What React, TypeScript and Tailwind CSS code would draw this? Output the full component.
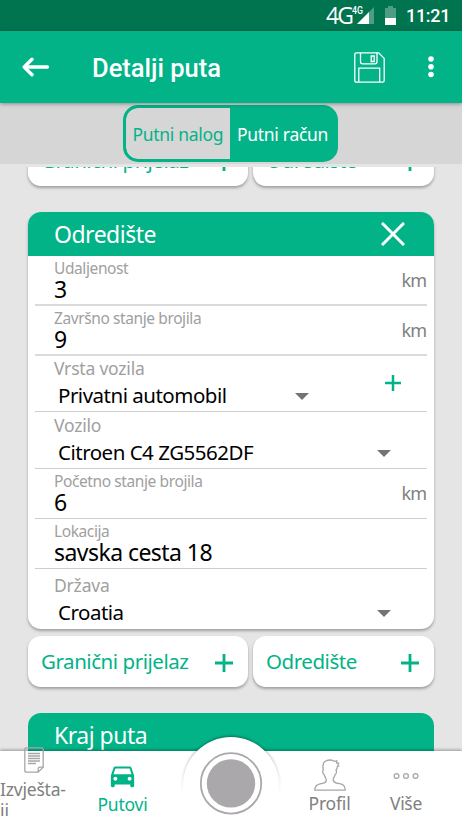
import { ReactNode } from 'react'
import { MdDirectionsCar } from 'react-icons/md'

function Plus({ className }: { className: string }) {
  return (
    <svg viewBox="0 0 18 18" className={className} fill="none" stroke="#02b388" strokeWidth="2.8">
      <path d="M9 0v18M0 9h18" />
    </svg>
  )
}

function StatusBar() {
  return (
    <div className="flex h-[31px] shrink-0 items-center bg-[#00734f] text-white">
      <span className="ml-[326px] w-[26px] font-['Open_Sans'] text-[23px] leading-[33px] tracking-[-1.8px] whitespace-nowrap">4G</span>
      <svg viewBox="0 0 24 31" className="h-[31px] w-6">
        <text x="0" y="14" fontFamily="Roboto" fontWeight="500" fontSize="10.5" textLength="11" lengthAdjust="spacingAndGlyphs" fill="#fff">4G</text>
        <path d="M22 7v17h-5V12z" fill="#4d9d84" />
        <path d="M5 24L17 12v12z" fill="#fff" />
      </svg>
      <svg viewBox="0 0 12 20" className="ml-[9px] h-5 w-3">
        <path d="M3 0h5v2h3v10H0V2h3z" fill="#4d9d84" />
        <path d="M0 12h11v7H0z" fill="#fff" />
      </svg>
      <span className="ml-[9px] font-[Roboto] text-[18px] leading-[31px] font-medium tracking-[-0.3px]">11:21</span>
    </div>
  )
}

function Toolbar() {
  return (
    <div className="relative z-10 flex h-[72px] shrink-0 items-center bg-[#02b388] text-white shadow-[0_1px_4px_rgba(0,0,0,0.35)]">
      <svg viewBox="0 0 28 20" className="ml-[22px] h-5 w-7" fill="none" stroke="#fff" strokeWidth="3.4" strokeLinecap="round" strokeLinejoin="round">
        <path d="M25.5 10H2.5M10 2.2L2.2 10l7.8 7.8" />
      </svg>
      <h1 className="mt-[2px] ml-[42px] w-[262px] font-[Roboto] text-[25.5px] leading-8 font-medium">Detalji puta</h1>
      <svg viewBox="0 0 31 31" className="h-[31px] w-[31px]" fill="none" stroke="#fff" strokeWidth="1.3">
        <path d="M2.5.8h22.2l5.5 5.6v22.2q0 1.6-1.6 1.6H2.4Q.8 30.2.8 28.6V2.5Q.8.8 2.5.8z" />
        <path d="M6.5.8v9q0 2 2 2H21q2 0 2-2v-9M4.800 30V16.200h20.900V30" />
        <path d="M17.200 4h3v5.500h-3z" />
      </svg>
      <svg viewBox="0 0 8 22" className="ml-[42px] h-[22px] w-2" fill="#fff">
        <circle cx="4" cy="3" r="2.8" />
        <circle cx="4" cy="10.8" r="2.8" />
        <circle cx="4" cy="18.5" r="2.8" />
      </svg>
    </div>
  )
}

function Tabs() {
  return (
    <div className="h-16 shrink-0 bg-[#e5e5e5]">
      <div className="flex h-[61px] bg-[#d6d6d6] pt-[2px] pl-[123px]">
        <div className="flex h-[57px] w-[215px] overflow-hidden rounded-[15px] border-[3px] border-[#02b388] bg-[#02b388] text-[17.5px] leading-[52px]">
          <div className="w-[104px] rounded-l-[12px] bg-[#d6d6d6] pl-[6.5px] tracking-[-0.3px] whitespace-nowrap text-[#02b388]">Putni nalog</div>
          <div className="flex-1 pl-[7px] tracking-[-0.3px] whitespace-nowrap text-white">Putni račun</div>
        </div>
      </div>
    </div>
  )
}

function AddButtons() {
  return (
    <div className="flex gap-[5px] text-[20.5px] leading-[51px] whitespace-nowrap text-[#02b388]">
      <div className="flex h-[51px] w-[220px] items-center justify-between rounded-[13px] bg-white pr-[15px] pl-[13px] shadow-[0_2px_3px_rgba(0,0,0,0.3)]">
        <span className="tracking-[-0.45px]">Granični prijelaz</span>
        <Plus className="mt-[3px] h-[18px] w-[18px]" />
      </div>
      <div className="flex h-[51px] w-[181px] items-center justify-between rounded-[13px] bg-white pr-[15px] pl-[13px] shadow-[0_2px_3px_rgba(0,0,0,0.3)]">
        <span className="tracking-[-0.45px]">Odredište</span>
        <Plus className="mt-[3px] h-[18px] w-[18px]" />
      </div>
    </div>
  )
}

function CardHeader({ title, children }: { title: string; children?: ReactNode }) {
  return (
    <div className="flex h-11 items-center justify-between bg-[#02b388] pr-[29px] pl-[26px] text-[23px] leading-[44px] text-white">
      <span className="tracking-[-0.5px]">{title}</span>
      {children}
    </div>
  )
}

function InputRow({ label, value, unit, thick }: { label: string; value: string; unit?: string; thick?: boolean }) {
  return (
    <div className={`mx-[7px] flex h-[50px] justify-between pt-[2px] pl-[19px] ${thick ? 'border-b-2 border-[#dadada]' : 'border-b border-[#cecece]'}`}>
      <div>
        <div className="text-[15.5px] leading-5 tracking-[-0.4px] text-[#a0a0a0]">{label}</div>
        <div className="-mt-px text-[23px] leading-[25px] tracking-[-0.55px] text-black">{value}</div>
      </div>
      {unit && <span className="mr-px text-[18px] leading-[44px] tracking-[-1px] text-[#808080]">{unit}</span>}
    </div>
  )
}

function SelectRow({ label, value, className, action }: { label: string; value: string; className: string; action?: boolean }) {
  return (
    <div className={`mx-[7px] flex pl-[19px] ${className}`}>
      <div className={action ? 'w-[255px]' : 'w-[337px]'}>
        <div className="text-[17.5px] leading-6 tracking-[-0.2px] text-[#a0a0a0]">{label}</div>
        <div className="mt-px flex items-center justify-between pl-1 text-[20.5px] leading-7 text-black">
          <span className="tracking-[-0.5px]">{value}</span>
          <svg viewBox="0 0 14 7" className="mt-[2px] h-[7px] w-[14px]" fill="#747474">
            <path d="M0 0h14L7 7z" />
          </svg>
        </div>
      </div>
      {action && <Plus className="mt-[19px] ml-[76px] h-4 w-4" />}
    </div>
  )
}

function NavBar() {
  return (
    <nav className="relative flex h-[71px] shrink-0 bg-white text-[17.5px] leading-[22px] text-[#808080] shadow-[0_-1px_3px_rgba(0,0,0,0.35)]">
      <div className="-mt-1 h-[69px] w-[66px] overflow-hidden">
        <svg viewBox="0 0 20 26" className="ml-6 h-[26px] w-5" fill="none" stroke="#a6a6a6" strokeWidth="1.3">
          <path d="M2.500.8h15q1.700 0 1.700 1.700v17.700l-5 5H2.500Q.8 25.200.8 23.500v-21Q.8.8 2.500.8zM19.200 20.200h-3.500q-1.500 0-1.500 1.500v3.500" />
          <path d="M4 6.500h12M4 9h12M4 11.500h12M4 14h12M4 16.500h8" />
        </svg>
        <div className="mt-[5px] tracking-[-0.2px] whitespace-nowrap">Izvješta-</div>
        <div className="-mt-px">ji</div>
      </div>
      <div className="flex w-[113px] flex-col items-center text-[#02b388]">
        <MdDirectionsCar className="mt-[9px] h-[31px] w-[31px]" />
        <span className="mt-[2px] tracking-[-0.2px]">Putovi</span>
      </div>
      {/* Raised record button */}
      <div className="absolute -top-[20px] left-[176px] h-[91px] w-[110px] overflow-hidden">
        <svg viewBox="0 0 110 91" className="h-[91px] w-[110px]">
          <defs>
            <filter id="glow" x="-20%" y="-20%" width="140%" height="140%">
              <feGaussianBlur stdDeviation="1.8" />
            </filter>
            <linearGradient id="fade" x1="0" y1="0" x2="0" y2="1">
              <stop offset="0" stopColor="#000" stopOpacity="0.5" />
              <stop offset="0.3" stopColor="#000" stopOpacity="0.2" />
              <stop offset="0.6" stopColor="#000" stopOpacity="0" />
            </linearGradient>
          </defs>
          <circle cx="55" cy="54" r="48.5" fill="url(#fade)" filter="url(#glow)" />
          <circle cx="55" cy="54" r="48" fill="#fff" />
          <circle cx="55" cy="52.4" r="30.2" fill="none" stroke="#aaa8aa" strokeWidth="1.8" />
          <circle cx="55" cy="52.4" r="24.2" fill="#aaa8aa" />
        </svg>
      </div>
      <div className="ml-[108px] flex w-[85px] flex-col items-center">
        <svg viewBox="0 0 32 32" className="mt-[8px] h-8 w-8" fill="none" stroke="#a6a6a6" strokeWidth="1.3">
          <path d="M.8 31.200h30.400c0-4-2-6-5.500-6.500l-3.500-.7c-2-.5-3-1.500-3-3.500 0-2 1.500-2.500 2-5 1.300-.5 1.800-4 .8-4.500 1-1 1.500-2 1.300-3.500l1.500-.5-1-1.500.8-1.500-2-.2.2-2-2.500.5C18 1 15 .6 12.500 1.600 8.800 2.800 8.500 7 9.300 11c-1.300.5-.5 4 .8 4.500.5 2.500 2.200 3.500 2.200 5.500s-1 2.700-2.800 3.200l-3.500.6C2.600 25.500.8 27.500.8 31.200z" />
        </svg>
        <span className="mt-px tracking-[-0.2px]">Profil</span>
      </div>
      <div className="flex w-[68px] flex-col items-center">
        <svg viewBox="0 0 26 8" className="mt-[21px] h-2 w-[26px]" fill="none" stroke="#a6a6a6" strokeWidth="1.3">
          <circle cx="3.5" cy="4" r="2.4" />
          <circle cx="13" cy="4" r="2.4" />
          <circle cx="22.5" cy="4" r="2.4" />
        </svg>
        <span className="mt-[12px] tracking-[-0.3px]">Više</span>
      </div>
    </nav>
  )
}

export default function App() {
  return (
    <div className="flex h-[822px] w-[462px] flex-col overflow-hidden bg-[#e5e5e5] font-['Noto_Sans',sans-serif]">
      <StatusBar />
      <Toolbar />
      <Tabs />

      <main className="flex h-[584px] shrink-0 flex-col overflow-hidden px-7">
        <div className="-mt-8">
          <AddButtons />
        </div>

        {/* Destination details */}
        <section className="mt-[26px] mb-[7px] h-[417px] w-[406px] shrink-0 overflow-hidden rounded-[13px] bg-white shadow-[0_2px_3px_rgba(0,0,0,0.3)]">
          <CardHeader title="Odredište">
            <svg viewBox="0 0 24 24" className="h-6 w-6" fill="none" stroke="#fff" strokeWidth="3">
              <path d="M1 1l22 22M23 1L1 23" />
            </svg>
          </CardHeader>
          <InputRow label="Udaljenost" value="3" unit="km" thick />
          <InputRow label="Završno stanje brojila" value="9" unit="km" thick />
          <SelectRow label="Vrsta vozila" value="Privatni automobil" className="h-14 border-b border-[#cecece]" action />
          <SelectRow label="Vozilo" value="Citroen C4 ZG5562DF" className="h-[57px] border-b border-[#cecece] pt-px" />
          <InputRow label="Početno stanje brojila" value="6" unit="km" />
          <InputRow label="Lokacija" value="savska cesta 18" />
          <SelectRow label="Država" value="Croatia" className="h-[60px] pt-1" />
        </section>

        <AddButtons />

        <section className="mt-[26px] w-[406px] shrink-0 overflow-hidden rounded-t-[13px]">
          <CardHeader title="Kraj puta" />
        </section>
      </main>

      <NavBar />
    </div>
  )
}
